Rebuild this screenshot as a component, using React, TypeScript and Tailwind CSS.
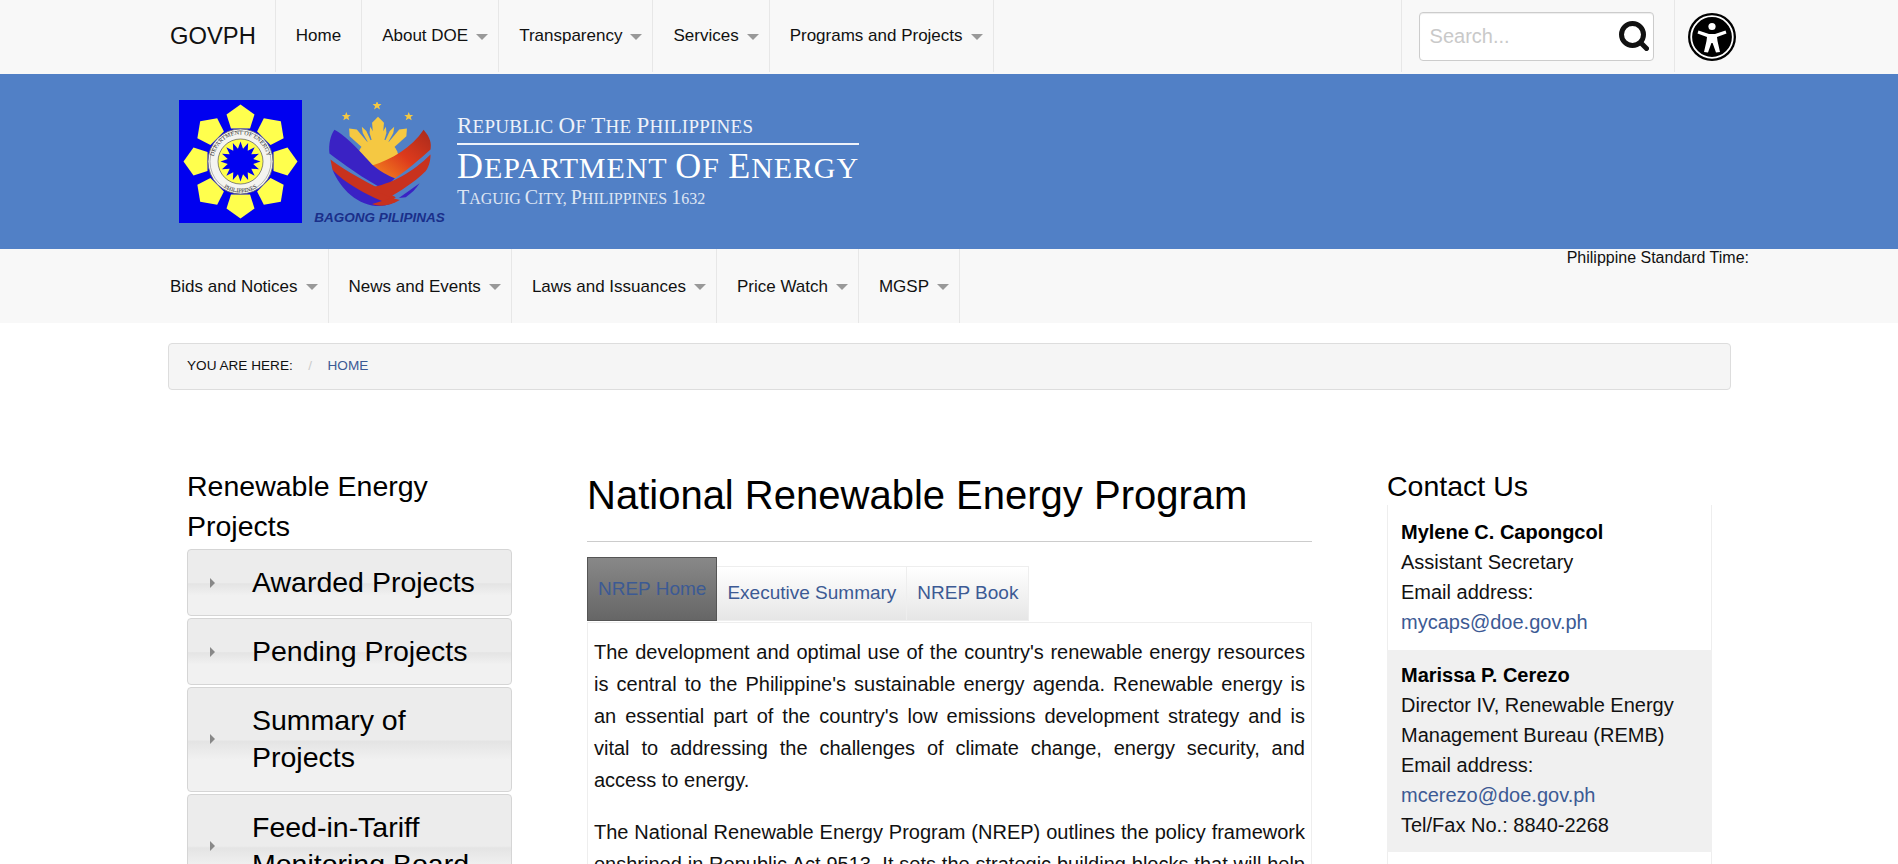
import React from 'react';

const topLinks = ['About DOE', 'Transparency', 'Services', 'Programs and Projects'];
const lowerLinks = ['Bids and Notices', 'News and Events', 'Laws and Issuances', 'Price Watch', 'MGSP'];

const Caret = () => (
  <span className="ml-[8px] mt-[2px] inline-block h-0 w-0 border-x-[6px] border-t-[6px] border-x-transparent border-t-[#999999]" />
);

const NavItem = ({ label, className = '' }: { label: string; className?: string }) => (
  <a className={`flex h-full items-center border-r border-[#e7e7e7] pl-[20px] pr-[10px] text-[17px] leading-none text-[#111111] ${className}`}>
    {label}
    <Caret />
  </a>
);

const petals = [0, 45, 90, 135, 180, 225, 270, 315];

// 16 point star for the middle of the seal
const starPoints = Array.from({ length: 32 }, (_, i) => {
  const r = i % 2 === 0 ? 20 : 13;
  const a = (i * Math.PI) / 16;
  return `${61.5 + r * Math.sin(a)},${61.5 - r * Math.cos(a)}`;
}).join(' ');

const DoeSeal = () => (
  <svg viewBox="0 0 123 123" className="h-[123px] w-[123px] shrink-0">
    <rect width="123" height="123" fill="#0000f0" />
    {petals.map(a => (
      <polygon
        key={a}
        points="61.5,4.5 75.5,14.5 71,28.5 52,28.5 47.5,14.5"
        fill="#ffff4d"
        transform={`rotate(${a} 61.5 61.5)`}
      />
    ))}
    <circle cx="61.5" cy="61.5" r="32.5" fill="#f4f4f0" stroke="#666666" strokeWidth="0.8" />
    <circle cx="61.5" cy="61.5" r="30.5" fill="none" stroke="#777777" strokeWidth="0.5" />
    <defs>
      <path id="seal-top" d="M34.5 61.5 A27 27 0 0 1 88.5 61.5" />
      <path id="seal-bottom" d="M30.5 61.5 A31 31 0 0 0 92.5 61.5" />
    </defs>
    <text fontFamily="'Liberation Serif', serif" fontSize="6" fill="#333333" textAnchor="middle">
      <textPath href="#seal-top" startOffset="50%">DEPARTMENT OF ENERGY</textPath>
    </text>
    <text fontFamily="'Liberation Serif', serif" fontSize="6" fill="#333333" textAnchor="middle">
      <textPath href="#seal-bottom" startOffset="50%">PHILIPPINES</textPath>
    </text>
    <circle cx="61.5" cy="61.5" r="22.5" fill="#ffff4d" stroke="#555555" strokeWidth="0.7" />
    <polygon points={starPoints} fill="#0000f0" />
  </svg>
);

const rays = [
  { a: 0, w: 6, l: 42 },
  { a: -14, w: 2, l: 33 },
  { a: 14, w: 2, l: 33 },
  { a: -27, w: 2, l: 36 },
  { a: 27, w: 2, l: 36 },
  { a: -44, w: 5, l: 42 },
  { a: 44, w: 5, l: 42 },
];

const BagongLogo = () => (
  <div className="ml-[12px] flex h-[123px] w-[131px] shrink-0 flex-col items-center">
    <svg viewBox="0 0 104 110" className="mt-[2px] h-[110px] w-[104px]">
      <defs>
        <linearGradient id="bp-red" x1="0" y1="1" x2="1" y2="0">
          <stop offset="0" stopColor="#f58a1f" />
          <stop offset="0.5" stopColor="#dd3a1c" />
          <stop offset="1" stopColor="#a82a1c" />
        </linearGradient>
      </defs>
      <polygon points="49,-1 50.2,2 53.5,2 51,4.2 52,7.5 49,5.6 46,7.5 47,4.2 44.5,2 47.8,2" fill="#f5c842" />
      <polygon points="18,10 19.2,13 22.5,13 20,15.2 21,18.5 18,16.6 15,18.5 16,15.2 13.5,13 16.8,13" fill="#f5c842" />
      <polygon points="81,10 82.2,13 85.5,13 83,15.2 84,18.5 81,16.6 78,18.5 79,15.2 76.5,13 79.8,13" fill="#f5c842" />
      <g fill="#f5c842">
        {rays.map(r => (
          <polygon
            key={r.a}
            points={`50,${57 - r.l} ${50 + r.w},${57 - r.l + 6} ${50 + r.w * 0.6},50 ${50 - r.w * 0.6},50 ${50 - r.w},${57 - r.l + 6}`}
            transform={`rotate(${r.a} 50 57)`}
          />
        ))}
        <circle cx="50" cy="58" r="21" />
      </g>
      <path d="M96 28 C103 36 104 42 103 48 C92 58 78 70 67 77 C58 74 50 70 44 64 C64 58 84 46 96 28 Z" fill="url(#bp-red)" />
      <path d="M6 28 C18 34 34 52 44 63 C52 70 60 74 67 77 L56 88 C36 78 14 62 1 52 C0 42 2 34 6 28 Z" fill="#3a22c4" />
      <path d="M4 68 C12 88 30 105 52 105 C58 105 64 103 68 100 C46 96 20 82 4 68 Z" fill="#3a22c4" />
      <path d="M2 58 C18 70 40 82 68 96 L60 102 C38 94 14 80 4 68 Z" fill="#c8321e" />
      <path d="M103 53 C103 60 101 66 98 70 C86 82 72 90 62 96 C56 94 48 90 42 86 C62 84 86 70 103 53 Z" fill="#c8321e" />
      <path d="M92 82 L71 97 L78 96 C84 92 88 88 92 82 Z" fill="#3a22c4" />
      <path d="M44 103 C52 106 62 105 72 99 L64 97 Z" fill="#c8321e" />
    </svg>
    <span className="mt-[1px] whitespace-nowrap font-['Liberation_Sans',sans-serif] text-[13.5px] font-bold italic leading-[11px] text-[#1a2f8a]">
      BAGONG PILIPINAS
    </span>
  </div>
);

// small caps like the banner artwork: bigger first letter, smaller rest
const Caps = ({ text, big, small }: { text: string; big: string; small: string }) => (
  <>
    {text.split(' ').map((w, i) => (
      <span key={i} className={small}>
        {i > 0 ? ' ' : ''}
        <span className={big}>{w[0]}</span>
        {w.slice(1)}
      </span>
    ))}
  </>
);

const SideItem = ({ children, className = '' }: { children: React.ReactNode; className?: string }) => (
  <a className={`flex items-center rounded-[4px] border border-[#d5d5d5] bg-[linear-gradient(#ececec_0%,#ececec_50%,#e4e4e4_52%,#f1f1f1_70%,#f1f1f1_100%)] py-[14px] pl-[22px] pr-[12px] ${className}`}>
    <span className="h-0 w-0 shrink-0 border-y-[5px] border-l-[5px] border-y-transparent border-l-[#888888]" />
    <span className="ml-[37px] text-[28.5px] leading-[37px] text-black">{children}</span>
  </a>
);

export default function App() {
  return (
    <div className="h-[864px] overflow-hidden bg-white font-['Liberation_Sans',Arial,sans-serif] text-black">
      {/* Top nav */}
      <nav className="h-[74px] bg-[#f8f8f8]">
        <div className="flex h-[72px] pl-[170px]">
          <a className="flex items-center pr-[19px] text-[23.75px] leading-none text-[#111111]">GOVPH</a>
          <a className="flex h-full items-center border-x border-[#e7e7e7] px-[20px] pb-[1px] text-[17px] leading-none text-[#111111]">Home</a>
          {topLinks.map(l => (
            <NavItem key={l} label={l} className="pb-[1px]" />
          ))}
          <div className="ml-[407px] flex h-full w-[273px] shrink-0 items-center border-l border-[#e7e7e7] pl-[17px]">
            <div className="flex h-[49px] w-[235px] items-center justify-between rounded-[4px] border border-[#cccccc] bg-white pl-[10px] pr-[4px] shadow-[inset_0_1px_1px_rgba(0,0,0,0.075)]">
              <span className="text-[20px] text-[#c9c9c9]">Search...</span>
              <svg viewBox="0 0 30 30" className="h-[30px] w-[30px]">
                <circle cx="13.5" cy="13.5" r="11" fill="none" stroke="#111111" strokeWidth="5" />
                <line x1="22" y1="22" x2="27.5" y2="27.5" stroke="#111111" strokeWidth="5" strokeLinecap="round" />
              </svg>
            </div>
          </div>
          <div className="flex h-full items-center border-l border-[#e7e7e7] pl-[13px] pt-[2px]">
            <svg viewBox="0 0 48 48" className="h-[48px] w-[48px]">
              <circle cx="24" cy="24" r="24" fill="#000000" />
              <circle cx="24" cy="24" r="20.8" fill="none" stroke="#ffffff" strokeWidth="1.8" />
              <circle cx="24" cy="13.5" r="3.6" fill="#ffffff" />
              <path d="M10.5 17.5 L21 21 H27 L37.5 17.5 L38.5 20.5 L29 24 L29.5 28 L32 39 L28 39.5 L24.6 30 H23.4 L20 39.5 L16 39 L18.5 28 L19 24 L9.5 20.5 Z" fill="#ffffff" />
            </svg>
          </div>
        </div>
      </nav>

      {/* Banner */}
      <header className="flex h-[175px] items-start bg-[#5180c6] pl-[179px] pt-[26px]">
        <DoeSeal />
        <BagongLogo />
        <div className="ml-[12px] mt-[14px] w-[402px] whitespace-nowrap font-['Liberation_Serif',serif] text-white">
          <div className="leading-[24px] tracking-[0.25px] opacity-90">
            <Caps text="REPUBLIC OF THE PHILIPPINES" big="text-[23px]" small="text-[19px]" />
          </div>
          <div className="mt-[3px] h-[2px] bg-[#eef2fa]" />
          <div className="mt-[1px] leading-[40px] tracking-[0.9px]">
            <Caps text="DEPARTMENT OF ENERGY" big="text-[36px]" small="text-[30px]" />
          </div>
          <div className="-mt-[6px] leading-[20px] opacity-80">
            <Caps text="TAGUIG CITY, PHILIPPINES 1632" big="text-[20px]" small="text-[16px]" />
          </div>
        </div>
      </header>

      {/* Lower nav */}
      <nav className="flex h-[74px] bg-[#f8f8f8] pl-[150px]">
        <div className="flex h-full">
          {lowerLinks.map(l => (
            <NavItem key={l} label={l} />
          ))}
        </div>
        <div className="ml-auto mr-[149px] text-[16px] leading-[17px] text-[#111111]">Philippine Standard Time:</div>
      </nav>

      {/* Breadcrumb */}
      <div className="ml-[168px] mt-[20px] flex h-[47px] w-[1563px] items-center rounded-[4px] border border-[#dddddd] bg-[#f5f5f5] pl-[18px] text-[13.6px]">
        <span className="text-[#111111]">YOU ARE HERE:</span>
        <span className="mx-[15.5px] text-[#cccccc]">/</span>
        <a className="text-[#3c5a94]">HOME</a>
      </div>

      {/* Main columns */}
      <main className="mt-[78px] flex pl-[187px]">
        <aside className="w-[325px] shrink-0">
          <h3 className="-mt-[2px] mb-[3px] text-[28.5px] font-normal leading-[40px]">Renewable Energy Projects</h3>
          <div className="flex flex-col gap-[2px]">
            <SideItem>Awarded Projects</SideItem>
            <SideItem>Pending Projects</SideItem>
            <SideItem className="pb-[15px]">Summary of Projects</SideItem>
            <SideItem>Feed-in-Tariff Monitoring Board</SideItem>
          </div>
        </aside>

        <section className="ml-[75px] w-[725px] shrink-0">
          <h1 className="mt-[2px] text-[40px] font-normal leading-[50px] text-black">National Renewable Energy Program</h1>
          <hr className="mt-[21px] border-t border-[#cccccc]" />
          <div className="mt-[15px] flex items-end">
            <a className="flex h-[64px] items-center border border-[#555555] bg-[linear-gradient(#888888,#666666)] px-[10px] text-[19px] leading-[24px] text-[#3c5a94]">NREP Home</a>
            <a className="flex h-[55px] items-center border-y border-r border-[#eeeeee] bg-[linear-gradient(#ffffff,#e6e6e6)] px-[10px] text-[19px] text-[#3c5a94]">Executive Summary</a>
            <a className="flex h-[55px] items-center border-y border-r border-[#eeeeee] bg-[linear-gradient(#ffffff,#e6e6e6)] px-[10px] text-[19px] text-[#3c5a94]">NREP Book</a>
          </div>
          <div className="mt-[1px] border border-[#eeeeee] px-[6px] pt-[13px] text-justify text-[20px] leading-[32px] text-[#111111]">
            <p>
              The development and optimal use of the country's renewable energy resources is central to the Philippine's sustainable energy agenda. Renewable energy is an essential part of the country's low emissions development strategy and is vital to addressing the challenges of climate change, energy security, and access to energy.
            </p>
            <p className="mt-[20px]">
              The National Renewable Energy Program (NREP) outlines the policy framework enshrined in Republic Act 9513. It sets the strategic building blocks that will help the country achieve its goals.
            </p>
          </div>
        </section>

        <aside className="ml-[75px] w-[325px] shrink-0">
          <h3 className="-mt-[2px] text-[28.5px] font-normal leading-[40px]">Contact Us</h3>
          <div className="-mt-[1px] text-[20px] leading-[30px] text-[#111111]">
            <div className="border-x border-[#eeeeee] px-[13px] pb-[13px] pt-[12px]">
              <div className="font-bold text-black">Mylene C. Capongcol</div>
              <div>Assistant Secretary</div>
              <div>Email address:</div>
              <a className="text-[#3c5a94]">mycaps@doe.gov.ph</a>
            </div>
            <div className="bg-[#f0f0f0] px-[14px] pb-[12px] pt-[10px]">
              <div className="font-bold text-black">Marissa P. Cerezo</div>
              <div>Director IV, Renewable Energy Management Bureau (REMB)</div>
              <div>Email address:</div>
              <a className="text-[#3c5a94]">mcerezo@doe.gov.ph</a>
              <div>Tel/Fax No.: 8840-2268</div>
            </div>
            <div className="h-[40px] border-x border-[#eeeeee]" />
          </div>
        </aside>
      </main>
    </div>
  );
}
